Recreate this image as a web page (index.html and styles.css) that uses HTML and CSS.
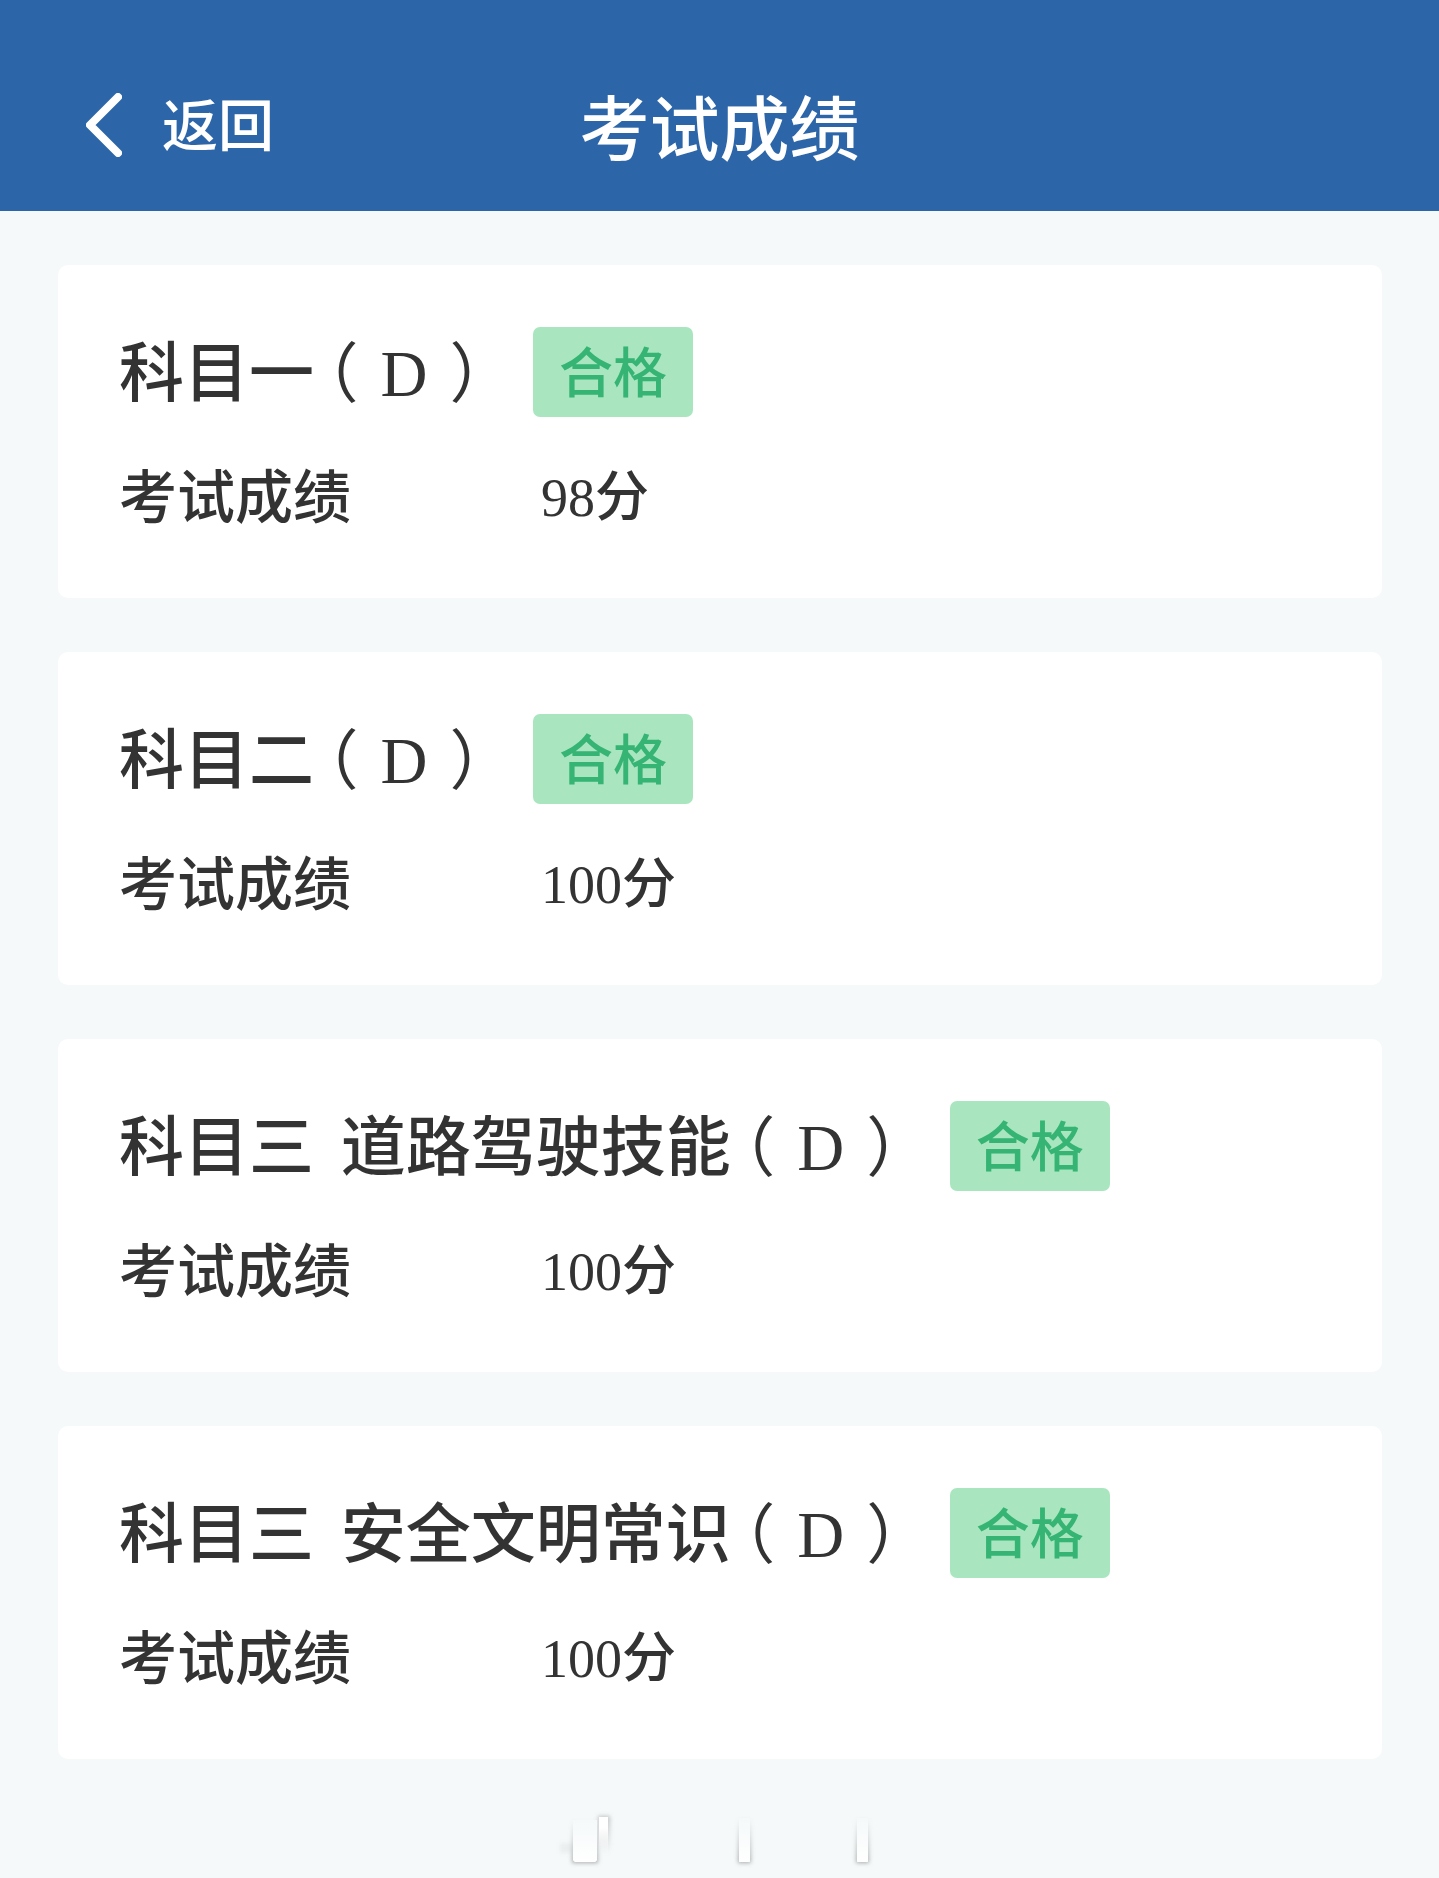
FILE: index.html
```html
<!DOCTYPE html>
<html lang="zh-CN">
<head>
<meta charset="utf-8">
<meta name="viewport" content="width=device-width, initial-scale=1">
<title>考试成绩</title>
<link rel="stylesheet" href="styles.css">
</head>
<body>
<header class="topbar">
  <a class="back" href="#">
    <svg class="back-icon" viewBox="0 0 36 64" aria-hidden="true"><path d="M32 4 L4 32 L32 60"/></svg>
    <span class="back-label">返回</span>
  </a>
  <h1 class="page-title">考试成绩</h1>
</header>
<main class="results">
  <section class="card">
    <div class="card-head">
      <h2 class="subject">科目一<span class="license">（<span class="letter">D</span>）</span></h2>
      <span class="badge">合格</span>
    </div>
    <dl class="score"><dt>考试成绩</dt><dd><span class="digits">98</span>分</dd></dl>
  </section>
  <section class="card">
    <div class="card-head">
      <h2 class="subject">科目二<span class="license">（<span class="letter">D</span>）</span></h2>
      <span class="badge">合格</span>
    </div>
    <dl class="score"><dt>考试成绩</dt><dd><span class="digits">100</span>分</dd></dl>
  </section>
  <section class="card">
    <div class="card-head">
      <h2 class="subject">科目三 <span class="topic">道路驾驶技能</span><span class="license">（<span class="letter">D</span>）</span></h2>
      <span class="badge">合格</span>
    </div>
    <dl class="score"><dt>考试成绩</dt><dd><span class="digits">100</span>分</dd></dl>
  </section>
  <section class="card">
    <div class="card-head">
      <h2 class="subject">科目三 <span class="topic">安全文明常识</span><span class="license">（<span class="letter">D</span>）</span></h2>
      <span class="badge">合格</span>
    </div>
    <dl class="score"><dt>考试成绩</dt><dd><span class="digits">100</span>分</dd></dl>
  </section>
</main>
<footer class="footer">
  <svg class="mark" viewBox="0 0 330 60" aria-hidden="true">
    <defs>
      <linearGradient id="down" x1="0" y1="0" x2="0" y2="1"><stop offset="0" stop-color="#fff" stop-opacity="0"/><stop offset="1" stop-color="#fff"/></linearGradient>
      <linearGradient id="up" x1="0" y1="0" x2="0" y2="1"><stop offset=".3" stop-color="#fff"/><stop offset="1" stop-color="#fff" stop-opacity="0"/></linearGradient>
      <linearGradient id="shade-down" x1="0" y1="0" x2="0" y2="1"><stop offset="0" stop-color="#888" stop-opacity="0"/><stop offset="1" stop-color="#888" stop-opacity=".7"/></linearGradient>
      <linearGradient id="shade-up" x1="0" y1="0" x2="0" y2="1"><stop offset="0" stop-color="#888" stop-opacity=".5"/><stop offset="1" stop-color="#888" stop-opacity="0"/></linearGradient>
      <filter id="soft" x="-50%" y="-20%" width="200%" height="140%"><feGaussianBlur stdDeviation="2"/></filter>
    </defs>
    <g filter="url(#soft)">
      <rect x="17" y="10" width="26" height="43" fill="url(#shade-down)"/>
      <rect x="43" y="6" width="12" height="38" fill="url(#shade-up)"/>
      <rect x="183" y="8" width="13" height="45" fill="url(#shade-down)"/>
      <rect x="301" y="8" width="13" height="45" fill="url(#shade-down)"/>
      <rect x="5" y="33" width="12" height="10" fill="#888" fill-opacity=".1"/>
    </g>
    <path d="M18 10H42V50L40 52H20L18 50Z" fill="#f5f9fa"/>
    <path d="M18 10H42V50L40 52H20L18 50Z" fill="url(#down)"/>
    <rect x="44" y="7" width="9" height="38" fill="url(#up)"/>
    <rect x="184" y="8" width="11" height="44" rx="1" fill="#f5f9fa"/>
    <rect x="184" y="8" width="11" height="44" rx="1" fill="url(#down)"/>
    <rect x="302" y="8" width="11" height="44" rx="1" fill="#f5f9fa"/>
    <rect x="302" y="8" width="11" height="44" rx="1" fill="url(#down)"/>
  </svg>
</footer>
</body>
</html>
```
FILE: styles.css
```css
* {
  box-sizing: border-box;
}

body {
  margin: 0;
  min-height: 100vh;
  background: #f5f9fa;
  color: #333;
  font-family: "Noto Sans CJK SC", sans-serif;
  line-height: 80px;
}

h1,
h2,
dl,
dd {
  margin: 0;
  font-weight: 400;
}

.topbar {
  display: grid;
  grid-template-columns: 1fr auto 1fr;
  align-items: center;
  padding: 80px 58px 41px;
  background: #2c66a8;
  color: #fff;
}

.back {
  display: flex;
  align-items: center;
  gap: 40px;
  padding-left: 28px;
  color: inherit;
  font-size: 56px;
  font-weight: 500;
  text-decoration: none;
  white-space: nowrap;
}

.back-label {
  padding-bottom: 6px;
}

.back-icon {
  width: 36px;
  height: 64px;
  fill: none;
  stroke: #fff;
  stroke-width: 8px;
  stroke-linecap: round;
  stroke-linejoin: round;
}

.page-title {
  font-size: 70px;
  font-weight: 500;
  line-height: 90px;
}

.results {
  display: flex;
  flex-direction: column;
  gap: 54px;
  padding: 54px 57px 0 58px;
}

.card {
  display: flex;
  flex-direction: column;
  gap: 36px;
  padding: 62px 61px 65px;
  border-radius: 10px;
  background: #fff;
}

.card-head {
  display: flex;
  align-items: center;
  gap: 51px;
}

.subject {
  padding-bottom: 8px;
  font-size: 65px;
  font-weight: 500;
  white-space: nowrap;
}

.topic {
  margin-left: 12px;
}

.license {
  margin-left: 12px;
  font-weight: 400;
  font-feature-settings: "halt";
}

.letter,
.digits {
  font-family: "Liberation Serif", serif;
  font-weight: 400;
  line-height: 1;
}

.letter {
  margin: 0 22px;
}

.badge {
  padding: 3px 26px 7px;
  border-radius: 7px;
  background: #a9e6c0;
  color: #35b474;
  font-size: 54px;
  font-weight: 500;
  white-space: nowrap;
}

.score {
  display: grid;
  grid-template-columns: 422px 1fr;
  font-size: 58px;
  font-weight: 500;
}

.score dd {
  font-size: 54px;
  font-weight: 500;
}

.footer {
  display: flex;
  justify-content: center;
  padding: 51px 0 6px;
}

.mark {
  width: 330px;
  height: 60px;
}
```
